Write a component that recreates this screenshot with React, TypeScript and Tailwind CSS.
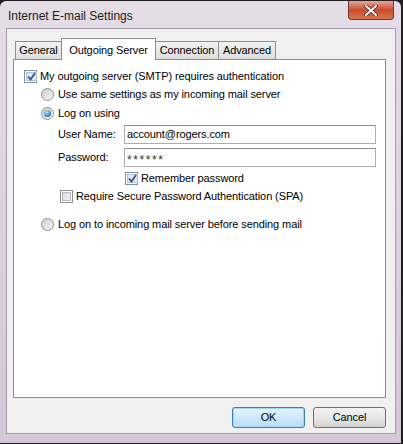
import React from 'react';

const Check = ({ checked }: { checked?: boolean }) => (
  <span className="w-[13px] h-[13px] shrink-0 border border-[#8e8f8f] bg-white p-[1px] flex">
    <span
      className={`flex-1 flex items-center justify-center border ${
        checked ? 'border-[#a9c6e0] bg-[#dce9f5]' : 'border-[#b9b9b9] bg-gradient-to-br from-[#d8d8d8] to-[#f4f4f4]'
      }`}
    >
      {checked && (
        <svg width="9" height="9" viewBox="0 0 9 9">
          <path d="M1 4.5 L3.5 7.5 L8 1" fill="none" stroke="#3e4d86" strokeWidth="1.8" />
        </svg>
      )}
    </span>
  </span>
);

const Radio = ({ checked }: { checked?: boolean }) => (
  <span className="w-[13px] h-[13px] shrink-0 rounded-full border border-[#8e8f8f] bg-gradient-to-br from-[#cfcfcf] to-[#f6f6f6] flex items-center justify-center">
    {checked && (
      <span className="w-[7px] h-[7px] rounded-full bg-[radial-gradient(circle_at_40%_35%,#bfe6ff_0%,#3a8fd0_55%,#1d4f8a_100%)]" />
    )}
  </span>
);

export default function App() {
  return (
    <div
      className="w-[403px] h-[444px] bg-[#221f24] text-[11px] tracking-[-0.1px] text-black overflow-hidden whitespace-nowrap"
      style={{ fontFamily: '"Liberation Sans", Arial, sans-serif' }}
    >
      <div className="w-[401px] h-[442px] mt-[1px] bg-gradient-to-b from-[#e4dde6] to-[#d3c6d6] rounded-t-[6px] flex flex-col">
        {/* Title bar */}
        <div className="h-[27px] flex items-start justify-between">
          <span className="ml-[8px] mt-[6px] text-[12px] tracking-normal text-[#1a1a1a]">Internet E-mail Settings</span>
          <span className="mr-[7px] w-[46px] h-[19px] rounded-b-[4px] border border-[#6e3a33] border-t-0 bg-gradient-to-b from-[#e7a695] via-[#c8492f] to-[#d9754e] flex items-center justify-center">
            <svg width="14" height="11" viewBox="0 0 14 11">
              <path d="M2 1 L12 10 M12 1 L2 10" stroke="#3b2a28" strokeWidth="3.6" strokeLinecap="round" />
              <path d="M2 1 L12 10 M12 1 L2 10" stroke="#ffffff" strokeWidth="2" strokeLinecap="round" />
            </svg>
          </span>
        </div>

        {/* Client area */}
        <div className="ml-[6px] w-[390px] h-[406px] border border-[#a69cab] bg-[#f0f0f0] flex flex-col">
          {/* Tabs */}
          <div className="ml-[8px] mt-[8px] h-[22px] flex items-end">
            <div className="h-[18px] w-[47px] border border-b-0 border-[#8e8f8f] bg-gradient-to-b from-[#f2f2f2] to-[#dedede] flex items-center justify-center">General</div>
            <div className="h-[22px] w-[95px] -ml-[1px] -mb-[1px] border border-b-0 border-[#8e8f8f] bg-white flex items-start pt-[3px] justify-center relative z-10">Outgoing Server</div>
            <div className="h-[18px] w-[64px] -ml-[1px] border border-b-0 border-[#8e8f8f] bg-gradient-to-b from-[#f2f2f2] to-[#dedede] flex items-center justify-center">Connection</div>
            <div className="h-[18px] w-[58px] -ml-[1px] border border-b-0 border-[#8e8f8f] bg-gradient-to-b from-[#f2f2f2] to-[#dedede] flex items-center justify-center">Advanced</div>
          </div>

          {/* Tab panel */}
          <div className="ml-[6px] w-[373px] h-[339px] border border-[#898c95] bg-white flex flex-col pl-[10px]">
            <div className="mt-[7px] h-[18px] flex items-center gap-[3px]">
              <Check checked />
              <span>My outgoing server (SMTP) requires authentication</span>
            </div>
            <div className="h-[18px] flex items-center gap-[4px] pl-[17px]">
              <Radio />
              <span>Use same settings as my incoming mail server</span>
            </div>
            <div className="mt-[1px] h-[18px] flex items-center gap-[4px] pl-[17px]">
              <Radio checked />
              <span>Log on using</span>
            </div>
            <div className="mt-[3px] h-[19px] flex items-center pl-[34px]">
              <span className="w-[66px]">User Name:</span>
              <div className="w-[252px] h-[19px] border border-[#abadb3] border-t-[#8e8f8f] flex items-center px-[2px]">account@rogers.com</div>
            </div>
            <div className="mt-[4px] h-[19px] flex items-center pl-[34px]">
              <span className="w-[66px]">Password:</span>
              <div className="w-[252px] h-[19px] border border-[#abadb3] border-t-[#8e8f8f] flex items-start pt-[2px] px-[2px] text-[12px] tracking-[1.6px] text-[#333]">******</div>
            </div>
            <div className="mt-[3px] h-[16px] flex items-center gap-[3px] pl-[101px]">
              <Check checked />
              <span>Remember password</span>
            </div>
            <div className="mt-[2px] h-[16px] flex items-center gap-[3px] pl-[36px]">
              <Check />
              <span>Require Secure Password Authentication (SPA)</span>
            </div>
            <div className="mt-[11px] h-[18px] flex items-center gap-[4px] pl-[17px]">
              <Radio />
              <span>Log on to incoming mail server before sending mail</span>
            </div>
          </div>

          {/* Buttons */}
          <div className="mt-[9px] mr-[9px] flex justify-end gap-[8px]">
            <div className="w-[73px] h-[21px] rounded-[3px] border border-[#3c7fb1] bg-gradient-to-b from-[#e5f5fd] to-[#b8def4] shadow-[inset_0_0_0_1px_#9fd8f3] flex items-center justify-center">OK</div>
            <div className="w-[73px] h-[21px] rounded-[3px] border border-[#707070] bg-gradient-to-b from-[#f2f2f2] via-[#e8e8e8] to-[#d2d2d2] flex items-center justify-center">Cancel</div>
          </div>
        </div>
      </div>
    </div>
  );
}
